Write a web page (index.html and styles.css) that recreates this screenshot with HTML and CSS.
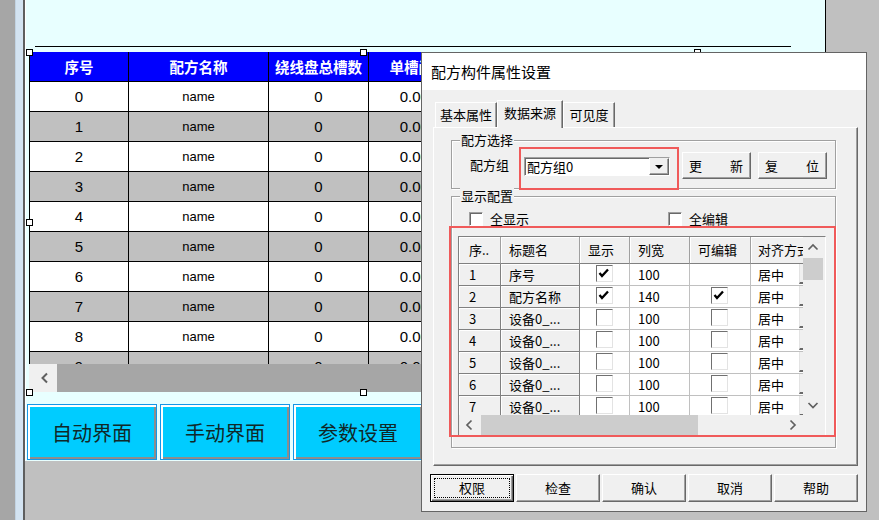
FILE: index.html
```html
<!DOCTYPE html>
<html lang="zh-CN">
<head>
<meta charset="utf-8">
<title>配方构件属性设置</title>
<link rel="stylesheet" href="styles.css">
</head>
<body>
<div class="app">
  <div class="s1"></div><div class="s2"></div><div class="s3"></div>
  <div class="work">
    <div class="canvas">
      <div class="topline"></div>
      <div class="rtable">
        <div class="rrow rhead"><div class="rc c1">序号</div><div class="rc c2">配方名称</div><div class="rc c3">绕线盘总槽数</div><div class="rc c4">单槽间距</div><div class="rc c5">单槽圈数</div><div class="rc c6">总圈数</div></div>
        <div class="rrow w"><div class="rc c1 num">0</div><div class="rc c2 nm">name</div><div class="rc c3 num">0</div><div class="rc c4 num">0.000</div><div class="rc c5 num">0</div><div class="rc c6 num">0</div></div>
        <div class="rrow g"><div class="rc c1 num">1</div><div class="rc c2 nm">name</div><div class="rc c3 num">0</div><div class="rc c4 num">0.000</div><div class="rc c5 num">0</div><div class="rc c6 num">0</div></div>
        <div class="rrow w"><div class="rc c1 num">2</div><div class="rc c2 nm">name</div><div class="rc c3 num">0</div><div class="rc c4 num">0.000</div><div class="rc c5 num">0</div><div class="rc c6 num">0</div></div>
        <div class="rrow g"><div class="rc c1 num">3</div><div class="rc c2 nm">name</div><div class="rc c3 num">0</div><div class="rc c4 num">0.000</div><div class="rc c5 num">0</div><div class="rc c6 num">0</div></div>
        <div class="rrow w"><div class="rc c1 num">4</div><div class="rc c2 nm">name</div><div class="rc c3 num">0</div><div class="rc c4 num">0.000</div><div class="rc c5 num">0</div><div class="rc c6 num">0</div></div>
        <div class="rrow g"><div class="rc c1 num">5</div><div class="rc c2 nm">name</div><div class="rc c3 num">0</div><div class="rc c4 num">0.000</div><div class="rc c5 num">0</div><div class="rc c6 num">0</div></div>
        <div class="rrow w"><div class="rc c1 num">6</div><div class="rc c2 nm">name</div><div class="rc c3 num">0</div><div class="rc c4 num">0.000</div><div class="rc c5 num">0</div><div class="rc c6 num">0</div></div>
        <div class="rrow g"><div class="rc c1 num">7</div><div class="rc c2 nm">name</div><div class="rc c3 num">0</div><div class="rc c4 num">0.000</div><div class="rc c5 num">0</div><div class="rc c6 num">0</div></div>
        <div class="rrow w"><div class="rc c1 num">8</div><div class="rc c2 nm">name</div><div class="rc c3 num">0</div><div class="rc c4 num">0.000</div><div class="rc c5 num">0</div><div class="rc c6 num">0</div></div>
        <div class="rrow g"><div class="rc c1 num">9</div><div class="rc c2 nm">name</div><div class="rc c3 num">0</div><div class="rc c4 num">0.000</div><div class="rc c5 num">0</div><div class="rc c6 num">0</div></div>
      </div>
      <div class="rscroll">
        <div class="rlb"><svg width="10" height="12" viewBox="0 0 10 12"><polyline points="7,1.5 2.5,6 7,10.5" fill="none" stroke="#606060" stroke-width="2"/></svg></div>
      </div>
      <div class="navbtns">
        <div class="nb">自动界面</div>
        <div class="nb">手动界面</div>
        <div class="nb">参数设置</div>
      </div>
      <span class="hd h-tl"></span><span class="hd h-tm"></span><span class="hd h-tr"></span>
      <span class="hd h-ml"></span><span class="hd h-mr"></span>
      <span class="hd h-bl"></span><span class="hd h-bm"></span><span class="hd h-br"></span>
    </div>
  </div>
</div>

<div class="dialog">
  <div class="dtitle">配方构件属性设置</div>
  <div class="dbody">
    <div class="tabs">
      <div class="tab t1">基本属性</div>
      <div class="tab t2 active">数据来源</div>
      <div class="tab t3">可见度</div>
    </div>
    <div class="panel">
      <div class="group g1">
        <span class="legend">配方选择</span>
        <div class="g1row">
          <span class="lbl">配方组</span>
          <div class="hl1">
            <div class="combo">
              <span class="ctext">配方组0</span>
              <span class="cbtn"><svg width="8" height="4" viewBox="0 0 8 4"><polygon points="0,0 8,0 4,4" fill="#000"/></svg></span>
            </div>
          </div>
          <div class="btn sb b-upd"><span>更</span><span>新</span></div>
          <div class="btn sb b-rst"><span>复</span><span>位</span></div>
        </div>
      </div>
      <div class="group g2">
        <span class="legend">显示配置</span>
        <div class="chkrow">
          <div class="chk c-all"><span class="cb"></span>全显示</div>
          <div class="chk"><span class="cb"></span>全编辑</div>
        </div>
        <div class="grid">
          <div class="gmain">
            <div class="gcells">
              <div class="grow ghead"><div class="gc w1">序..</div><div class="gc w2">标题名</div><div class="gc w3">显示</div><div class="gc w4">列宽</div><div class="gc w5">可编辑</div><div class="gc w6">对齐方式</div></div>
              <div class="grow"><div class="gc fx w1">1</div><div class="gc fx w2">序号</div><div class="gc w3 ckc"><span class="gcb on"><svg width="15" height="15" viewBox="0 0 15 15"><polyline points="2.5,7 5,10 11,3.5" fill="none" stroke="#000" stroke-width="2.3"/></svg></span></div><div class="gc w4">100</div><div class="gc w5 ckc"></div><div class="gc w6"><span class="al">居中</span><span class="ddb"></span></div></div>
              <div class="grow"><div class="gc fx w1">2</div><div class="gc fx w2">配方名称</div><div class="gc w3 ckc"><span class="gcb on"><svg width="15" height="15" viewBox="0 0 15 15"><polyline points="2.5,7 5,10 11,3.5" fill="none" stroke="#000" stroke-width="2.3"/></svg></span></div><div class="gc w4">140</div><div class="gc w5 ckc e"><span class="gcb on"><svg width="15" height="15" viewBox="0 0 15 15"><polyline points="2.5,7 5,10 11,3.5" fill="none" stroke="#000" stroke-width="2.3"/></svg></span></div><div class="gc w6"><span class="al">居中</span><span class="ddb"></span></div></div>
              <div class="grow"><div class="gc fx w1">3</div><div class="gc fx w2">设备0_...</div><div class="gc w3 ckc"><span class="gcb"></span></div><div class="gc w4">100</div><div class="gc w5 ckc e"><span class="gcb"></span></div><div class="gc w6"><span class="al">居中</span><span class="ddb"></span></div></div>
              <div class="grow"><div class="gc fx w1">4</div><div class="gc fx w2">设备0_...</div><div class="gc w3 ckc"><span class="gcb"></span></div><div class="gc w4">100</div><div class="gc w5 ckc e"><span class="gcb"></span></div><div class="gc w6"><span class="al">居中</span><span class="ddb"></span></div></div>
              <div class="grow"><div class="gc fx w1">5</div><div class="gc fx w2">设备0_...</div><div class="gc w3 ckc"><span class="gcb"></span></div><div class="gc w4">100</div><div class="gc w5 ckc e"><span class="gcb"></span></div><div class="gc w6"><span class="al">居中</span><span class="ddb"></span></div></div>
              <div class="grow"><div class="gc fx w1">6</div><div class="gc fx w2">设备0_...</div><div class="gc w3 ckc"><span class="gcb"></span></div><div class="gc w4">100</div><div class="gc w5 ckc e"><span class="gcb"></span></div><div class="gc w6"><span class="al">居中</span><span class="ddb"></span></div></div>
              <div class="grow"><div class="gc fx w1">7</div><div class="gc fx w2">设备0_...</div><div class="gc w3 ckc"><span class="gcb"></span></div><div class="gc w4">100</div><div class="gc w5 ckc e"><span class="gcb"></span></div><div class="gc w6"><span class="al">居中</span><span class="ddb"></span></div></div>
            </div>
            <div class="gvs">
              <div class="ab"><svg width="20" height="20" viewBox="0 0 20 20"><polyline points="5.5,12.5 10,8 14.5,12.5" fill="none" stroke="#606060" stroke-width="1.7"/></svg></div>
              <div class="vth"></div>
              <div class="sp"></div>
              <div class="ab"><svg width="20" height="20" viewBox="0 0 20 20"><polyline points="5.5,8 10,12.5 14.5,8" fill="none" stroke="#606060" stroke-width="1.7"/></svg></div>
            </div>
          </div>
          <div class="ghs">
            <div class="ghtrack">
              <div class="ab"><svg width="20" height="20" viewBox="0 0 20 20"><polyline points="12.5,5.5 8,10 12.5,14.5" fill="none" stroke="#606060" stroke-width="1.7"/></svg></div>
              <div class="hth"></div>
              <div class="sp"></div>
              <div class="ab"><svg width="20" height="20" viewBox="0 0 20 20"><polyline points="7.5,5.5 12,10 7.5,14.5" fill="none" stroke="#606060" stroke-width="1.7"/></svg></div>
            </div>
            <div class="corner"></div>
          </div>
        </div>
        <div class="hl2"></div>
      </div>
    </div>
    <div class="dbtns">
      <div class="btn db def">权限</div>
      <div class="btn db">检查</div>
      <div class="btn db">确认</div>
      <div class="btn db">取消</div>
      <div class="btn db">帮助</div>
    </div>
  </div>
</div>
</body>
</html>
```
FILE: styles.css
```css
* { box-sizing: border-box; }

body {
  margin: 0;
  width: 879px;
  height: 520px;
  overflow: hidden;
  position: relative;
  background: #c0c0c0;
  font-family: "Noto Sans CJK SC", "Liberation Sans", sans-serif;
  font-size: 13px;
  color: #000;
}

.app { display: flex; height: 520px; }
.s1 { width: 15px; background: #a6a6a6; }
.s2 { width: 8px; background: #d3e3f1; border-left: 1px solid #c2d3e2; }
.s3 { width: 2px; background: #5e5e5e; }
.work { flex: 1; background: #c0c0c0; }

/* HMI design canvas */
.canvas {
  position: relative;
  width: 801px;
  height: 461px;
  padding-top: 46px;
  background: #e8ffff;
  border-left: 1px solid #ffffff;
  border-right: 1px solid #000;
}
.topline { margin-left: 9px; width: 756px; height: 1px; background: #000; }

.rtable {
  margin: 5px 0 0 3px;
  width: 669px;
  height: 312px;
  overflow: hidden;
  border-left: 1px solid #000;
}
.rrow { display: flex; height: 30px; border-bottom: 1px solid #000; }
.rrow.w { background: #fff; }
.rrow.g { background: #c0c0c0; }
.rhead {
  background: #0000ff;
  color: #fff;
  font-weight: bold;
  font-size: 14.5px;
}
.rc {
  flex: none;
  display: flex;
  align-items: center;
  justify-content: center;
  border-right: 1px solid #000;
  white-space: nowrap;
  overflow: hidden;
}
.c1 { width: 99px; }
.c2 { width: 140px; }
.c3 { width: 100px; }
.c4 { width: 100px; }
.c5 { width: 100px; }
.c6 { width: 128px; }
.num { font-family: "Liberation Sans", sans-serif; font-size: 15px; }
.nm { font-family: "Liberation Sans", sans-serif; font-size: 13px; }

.rscroll {
  display: flex;
  margin-left: 3px;
  width: 669px;
  height: 28px;
  background: #a6a6a6;
}
.rlb {
  width: 28px;
  height: 28px;
  background: #f0f0f0;
  display: flex;
  align-items: center;
  justify-content: center;
  padding-left: 3px;
}

.navbtns { display: flex; gap: 3px; margin: 12px 0 0 1px; }
.nb {
  width: 130px;
  height: 56px;
  background: #00ccff;
  border: 1px solid #1496e6;
  box-shadow: inset 2px 2px 0 #ffffff, inset -2px -2px 0 #8c8c8c;
  display: flex;
  align-items: center;
  justify-content: center;
  font-size: 20px;
  color: #102828;
}

/* selection handles */
.hd {
  position: absolute;
  width: 7px;
  height: 7px;
  background: #fff;
  border: 1px solid #000;
}
.h-tl { left: 0; top: 49px; }
.h-tm { left: 334px; top: 49px; }
.h-tr { left: 668px; top: 49px; }
.h-ml { left: 0; top: 219px; }
.h-mr { left: 668px; top: 219px; }
.h-bl { left: 0; top: 389px; }
.h-bm { left: 334px; top: 389px; }
.h-br { left: 668px; top: 389px; }

/* dialog */
.dialog {
  position: absolute;
  left: 421px;
  top: 52px;
  width: 446px;
  height: 460px;
  border: 1px solid #646464;
  background: #f0f0f0;
}
.dtitle {
  height: 37px;
  line-height: 37px;
  background: #fff;
  padding-left: 9px;
  font-size: 15px;
}
.dbody { padding: 10px 0 0 11px; }

.tabs { display: flex; align-items: flex-end; height: 27px; margin-left: 2px; }
.tab {
  height: 25px;
  line-height: 24px;
  text-align: center;
  background: #f0f0f0;
  border-top: 1px solid #fff;
  border-left: 1px solid #fff;
  border-right: 1px solid #696969;
  box-shadow: inset -1px 0 0 #a0a0a0;
}
.t1 { width: 62px; }
.t2 { width: 66px; }
.t3 { width: 52px; }
.tab.active {
  position: relative;
  z-index: 2;
  height: 28px;
  margin-bottom: -1px;
  line-height: 23px;
}

.panel {
  width: 425px;
  height: 339px;
  border-top: 1px solid #fff;
  border-left: 1px solid #fff;
  border-right: 1px solid #696969;
  border-bottom: 1px solid #696969;
  box-shadow: inset -1px -1px 0 #a0a0a0;
  padding-top: 12px;
}

.group {
  position: relative;
  width: 385px;
  margin-left: 17px;
  border: 1px solid #a0a0a0;
  box-shadow: 1px 1px 0 #fff, inset 1px 1px 0 #fff;
}
.g1 { height: 49px; }
.g2 { margin-top: 7px; height: 252px; }
.legend {
  position: absolute;
  left: 8px;
  top: -9px;
  padding: 0 1px;
  line-height: 16px;
  background: #f0f0f0;
}

.g1row { display: flex; align-items: flex-start; padding-left: 18px; }
.lbl { margin-top: 16px; line-height: 16px; margin-right: 10px; }
.hl1 {
  margin-top: 6px;
  width: 160px;
  height: 43px;
  border: 2px solid #f05a5a;
  padding: 8px 0 0 3px;
}
.combo {
  display: flex;
  width: 146px;
  height: 19px;
  background: #fff;
  border: 1px solid;
  border-color: #a0a0a0 #fff #fff #a0a0a0;
  box-shadow: inset 1px 1px 0 #696969;
}
.ctext { flex: 1; line-height: 17px; padding-left: 2px; }
.cbtn {
  width: 20px;
  height: 17px;
  background: #f0f0f0;
  border: 1px solid;
  border-color: #f0f0f0 #696969 #696969 #fff;
  box-shadow: inset -1px -1px 0 #a0a0a0;
  display: flex;
  align-items: center;
  justify-content: center;
}

.btn {
  background: #f0f0f0;
  border: 1px solid;
  border-color: #fff #696969 #696969 #fff;
  box-shadow: inset -1px -1px 0 #a0a0a0;
}
.sb {
  margin-top: 11px;
  width: 69px;
  height: 27px;
  display: flex;
  justify-content: space-between;
  padding: 0 7px 0 6px;
  line-height: 25px;
}
.b-upd { margin-left: 3px; }
.b-rst { margin-left: 7px; }

.chkrow {
  display: flex;
  align-items: center;
  height: 14px;
  margin-top: 15px;
  padding-left: 17px;
  line-height: 16px;
}
.chk { display: flex; align-items: center; }
.c-all { width: 199px; }
.cb {
  width: 14px;
  height: 14px;
  margin-right: 7px;
  background: #fff;
  border: 1px solid;
  border-color: #a0a0a0 #fff #fff #a0a0a0;
  box-shadow: inset 1px 1px 0 #696969;
}

.grid {
  display: flex;
  flex-direction: column;
  margin: 10px 0 0 6px;
  width: 368px;
  height: 200px;
  background: #f0f0f0;
  border: 1px solid;
  border-color: #808080 #fff #fff #808080;
}
.gmain { display: flex; height: 178px; }
.gcells { width: 344px; overflow: hidden; background: #fff; }
.grow { display: flex; height: 22px; }
.gc {
  flex: none;
  height: 22px;
  line-height: 21px;
  padding-left: 8px;
  white-space: nowrap;
  overflow: hidden;
  background: #fff;
  border-right: 1px solid #c0c0c0;
  border-bottom: 1px solid #c0c0c0;
}
.gc.fx {
  background: #f0f0f0;
  border-right-color: #808080;
  border-bottom-color: #808080;
  box-shadow: inset 1px 1px 0 #fff;
}
.ghead { height: 27px; }
.ghead .gc {
  height: 27px;
  line-height: 26px;
  background: #f0f0f0;
  border-right: 1px solid #a0a0a0;
  border-bottom: 1px solid #808080;
  box-shadow: inset 1px 1px 0 #fff;
}
.w1 { width: 42px; }
.gc.w1 { padding-left: 10px; }
.w2 { width: 79px; }
.w3 { width: 50px; }
.w4 { width: 60px; }
.w5 { width: 61px; }
.w6 { width: 80px; }
.ghead .gc.w6 { padding-left: 6px; }
.grow .gc.w6 { display: flex; padding-left: 7px; }
.al { width: 41px; flex: none; }
.ddb {
  width: 18px;
  height: 20px;
  background: #f0f0f0;
  border-left: 1px solid #e3e3e3;
  border-bottom: 2px solid #696969;
}
.gc.ckc { padding-left: 16px; }
.gc.ckc.e { padding-left: 21px; }
.gcb {
  display: block;
  width: 17px;
  height: 17px;
  margin-top: 1px;
  background: #fff;
  border: 1px solid;
  border-color: #707070 #e3e3e3 #e3e3e3 #707070;
}
.gcb svg { display: block; }

.gvs { width: 20px; display: flex; flex-direction: column; background: #f0f0f0; }
.ab { width: 20px; height: 20px; flex: none; background: #f0f0f0; }
.ab svg { display: block; }
.vth { margin-top: 1px; height: 22px; background: #cdcdcd; }
.sp { flex: 1; }

.ghs { display: flex; height: 20px; }
.ghtrack { display: flex; width: 344px; background: #f0f0f0; }
.hth { margin-left: 2px; width: 217px; background: #cdcdcd; }
.corner { flex: 1; background: #f0f0f0; }

.hl2 {
  position: absolute;
  left: -3px;
  top: 29px;
  width: 387px;
  height: 211px;
  border: 2px solid #f05a5a;
}

.dbtns { display: flex; gap: 2px; margin: 8px 0 0 -3px; }
.db {
  width: 84px;
  height: 28px;
  line-height: 26px;
  text-align: center;
}
.db.def {
  border: 1px solid #000;
  box-shadow: inset 1px 1px 0 #fff, inset -1px -1px 0 #696969, inset -2px -2px 0 #a0a0a0;
  outline: 1px dotted #000;
  outline-offset: -5px;
}
```
